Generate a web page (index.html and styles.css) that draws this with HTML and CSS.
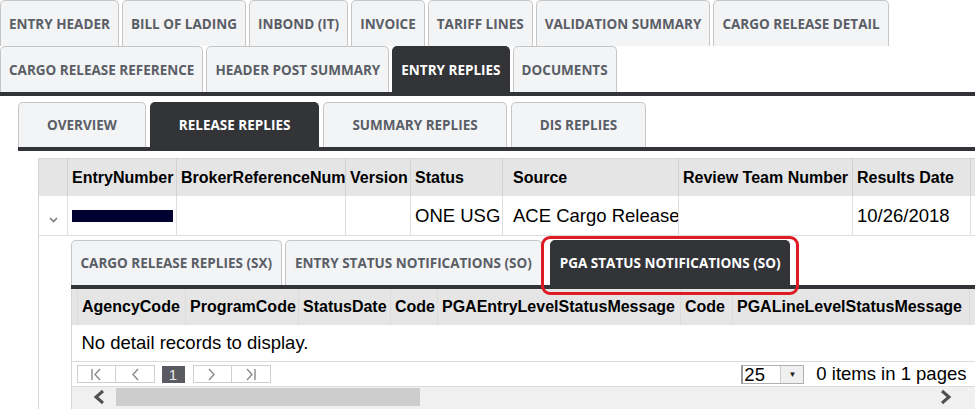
FILE: index.html
```html
<!DOCTYPE html>
<html lang="en">
<head>
  <meta charset="UTF-8" />
  <title>Entry Replies</title>
  <link rel="stylesheet" href="styles.css">
</head>
<body>
  <ul class="tabs main-tabs">
    <li class="tab">Entry Header</li>
    <li class="tab">Bill of Lading</li>
    <li class="tab">Inbond (IT)</li>
    <li class="tab">Invoice</li>
    <li class="tab">Tariff Lines</li>
    <li class="tab">Validation Summary</li>
    <li class="tab">Cargo Release Detail</li>
    <li class="tab">Cargo Release Reference</li>
    <li class="tab">Header Post Summary</li>
    <li class="tab active">Entry Replies</li>
    <li class="tab">Documents</li>
  </ul>

  <ul class="tabs sub-tabs">
    <li class="tab">Overview</li>
    <li class="tab active">Release Replies</li>
    <li class="tab">Summary Replies</li>
    <li class="tab">DIS Replies</li>
  </ul>

  <div class="grid">
    <table class="grid-table">
      <colgroup>
        <col class="w-hier">
        <col class="w-entry">
        <col class="w-broker">
        <col class="w-version">
        <col class="w-status">
        <col class="w-source">
        <col class="w-team">
        <col class="w-date">
        <col class="w-rest">
      </colgroup>
      <thead>
        <tr>
          <th></th>
          <th>EntryNumber</th>
          <th>BrokerReferenceNum</th>
          <th>Version</th>
          <th>Status</th>
          <th class="source">Source</th>
          <th>Review Team Number</th>
          <th>Results Date</th>
          <th></th>
        </tr>
      </thead>
      <tbody>
        <tr class="master-row">
          <td class="expand">
            <svg width="9" height="6" viewBox="0 0 9 6"><path d="M1 1 L4.5 4.5 L8 1" fill="none" stroke="#7a7a7a" stroke-width="1.6"/></svg>
          </td>
          <td><span class="redacted"></span></td>
          <td></td>
          <td></td>
          <td>ONE USG</td>
          <td class="source">ACE Cargo Release</td>
          <td></td>
          <td>10/26/2018</td>
          <td></td>
        </tr>
        <tr class="detail-row">
          <td></td>
          <td class="detail-cell" colspan="8">
            <ul class="tabs inner-tabs">
              <li class="tab">Cargo Release Replies (SX)</li>
              <li class="tab">Entry Status Notifications (SO)</li>
              <li class="tab active callout">PGA Status Notifications (SO)</li>
            </ul>

            <div class="inner-grid">
              <div class="inner-scroll">
                <table class="inner-table">
                  <colgroup>
                    <col class="w-ihier">
                    <col class="w-agency">
                    <col class="w-program">
                    <col class="w-sdate">
                    <col class="w-code">
                    <col class="w-entrymsg">
                    <col class="w-code2">
                    <col class="w-linemsg">
                    <col class="w-irest">
                  </colgroup>
                  <thead>
                    <tr>
                      <th></th>
                      <th>AgencyCode</th>
                      <th>ProgramCode</th>
                      <th>StatusDate</th>
                      <th>Code</th>
                      <th>PGAEntryLevelStatusMessage</th>
                      <th>Code</th>
                      <th>PGALineLevelStatusMessage</th>
                      <th></th>
                    </tr>
                  </thead>
                </table>
              </div>
              <div class="no-records">No detail records to display.</div>

              <div class="pager">
                <span class="pg-btn">
                  <svg width="12" height="13" viewBox="0 0 12 13"><path d="M2 1 V12 M10 1 L5 6.5 L10 12" fill="none" stroke="#8a8a8a" stroke-width="1.4"/></svg>
                </span><span class="pg-btn">
                  <svg width="8" height="13" viewBox="0 0 8 13"><path d="M7 1 L2 6.5 L7 12" fill="none" stroke="#8a8a8a" stroke-width="1.4"/></svg>
                </span>
                <span class="pg-current">1</span>
                <span class="pg-btn">
                  <svg width="8" height="13" viewBox="0 0 8 13"><path d="M1 1 L6 6.5 L1 12" fill="none" stroke="#8a8a8a" stroke-width="1.4"/></svg>
                </span><span class="pg-btn">
                  <svg width="12" height="13" viewBox="0 0 12 13"><path d="M2 1 L7 6.5 L2 12 M10 1 V12" fill="none" stroke="#8a8a8a" stroke-width="1.4"/></svg>
                </span>

                <div class="page-size">
                  <span class="ps-value">25</span>
                  <span class="ps-arrow">▼</span>
                </div>
                <span class="pager-info">0 items in 1 pages</span>
              </div>

              <div class="hscroll">
                <span class="sb-arrow sb-left">
                  <svg width="12" height="16" viewBox="0 0 12 16"><path d="M10 2 L3 8 L10 14" fill="none" stroke="#505050" stroke-width="3"/></svg>
                </span>
                <span class="sb-thumb"></span>
                <span class="sb-arrow sb-right">
                  <svg width="12" height="16" viewBox="0 0 12 16"><path d="M2 2 L9 8 L2 14" fill="none" stroke="#505050" stroke-width="3"/></svg>
                </span>
              </div>
            </div>
          </td>
        </tr>
      </tbody>
    </table>
  </div>
</body>
</html>
```

FILE: styles.css
```css
html, body {
  margin: 0;
  overflow: hidden;
}

body {
  width: 975px;
  height: 409px;
  background: #ffffff;
  color: #000000;
  font-family: 'Liberation Sans', Arial, sans-serif;
}

/* tab strips */
.tabs {
  list-style: none;
  margin: 0;
  padding: 0;
  display: flex;
  flex-wrap: wrap;
  column-gap: 3px;
  border-bottom: 4px solid #333438;
}

.tab {
  box-sizing: border-box;
  height: 46px;
  display: flex;
  align-items: center;
  padding: 0 8px;
  background: #f3f4f6;
  border: 1px solid #c6c6c6;
  border-bottom: none;
  border-radius: 5px 5px 0 0;
  color: #5a5e66;
  font-family: 'Open Sans', sans-serif;
  font-weight: 700;
  font-size: 13.5px;
  text-transform: uppercase;
  white-space: nowrap;
}

.tab.active {
  background: #333438;
  border-color: #333438;
  color: #ffffff;
}

.sub-tabs {
  margin: 6px 0 0 18px;
  column-gap: 4px;
}

.sub-tabs .tab {
  height: 45px;
  padding: 0 28px;
  justify-content: center;
}

.inner-tabs {
  column-gap: 3px;
}

.inner-tabs .tab {
  height: 45px;
  padding: 0 9px;
}

.callout {
  position: relative;
  margin-left: 5px;
}

.callout::after {
  content: '';
  position: absolute;
  top: -5px;
  left: -10px;
  right: -10px;
  bottom: -10px;
  border: 3px solid #de1a22;
  border-radius: 9px;
}

/* outer grid */
.grid {
  margin: 7px 0 0 38px;
}

.grid-table {
  border-collapse: collapse;
  table-layout: fixed;
  width: 1040px;
  border-left: 1px solid #d6d6d6;
  border-top: 1px solid #d6d6d6;
}

.w-hier { width: 29px; }
.w-entry { width: 109px; }
.w-broker { width: 169px; }
.w-version { width: 65px; }
.w-status { width: 92px; }
.w-source { width: 176px; }
.w-team { width: 174px; }
.w-date { width: 118px; }
.w-rest { width: 108px; }

.grid-table th {
  height: 37px;
  padding: 0 4px;
  background: #e5e5e5;
  border-right: 1px solid #d2d2d2;
  font-size: 16px;
  font-weight: 700;
  text-align: left;
  white-space: nowrap;
  overflow: hidden;
}

.master-row td {
  height: 37px;
  padding: 0 4px;
  border-right: 1px solid #dedede;
  border-bottom: 1px solid #dedede;
  font-size: 18.5px;
  white-space: nowrap;
  overflow: hidden;
}

.grid-table .source {
  padding-left: 10px;
}

.master-row td.expand {
  padding: 2px 0 0;
  text-align: center;
}

.redacted {
  display: block;
  width: 101px;
  height: 12px;
  background: #00002e;
}

.detail-row td {
  vertical-align: top;
  padding: 0;
}

.detail-cell {
  padding: 4px 0 0 3px !important;
}

/* inner grid */
.inner-grid {
  width: 905px;
  border-left: 1px solid #d6d6d6;
}

.inner-scroll {
  overflow: hidden;
}

.inner-table {
  border-collapse: collapse;
  table-layout: fixed;
  width: 1000px;
}

.w-ihier { width: 6px; }
.w-agency { width: 108px; }
.w-program { width: 113px; }
.w-sdate { width: 92px; }
.w-code { width: 47px; }
.w-entrymsg { width: 243px; }
.w-code2 { width: 52px; }
.w-linemsg { width: 237px; }
.w-irest { width: 102px; }

.inner-table th {
  height: 36px;
  padding: 0 4px;
  border-right: 1px solid #dcdcdc;
  font-size: 16px;
  font-weight: 700;
  text-align: left;
  white-space: nowrap;
  overflow: hidden;
}

.inner-table th:first-child {
  padding: 0;
}

.no-records {
  height: 36px;
  line-height: 36px;
  padding-left: 10px;
  border-bottom: 1px solid #dcdcdc;
  font-size: 18.5px;
}

/* pager */
.pager {
  height: 24px;
  display: flex;
  align-items: center;
  padding: 0 10px 0 5px;
  border-bottom: 1px solid #dcdcdc;
}

.pg-btn {
  box-sizing: border-box;
  width: 39px;
  height: 18px;
  display: flex;
  align-items: center;
  justify-content: center;
  border: 1px solid #cfcfcf;
  background: #ffffff;
}

.pg-btn + .pg-btn {
  border-left: none;
}

.pg-current {
  box-sizing: border-box;
  width: 23px;
  height: 17px;
  margin: 0 8px 0 7px;
  background: #5a5a62;
  color: #e8e8e8;
  font-size: 15px;
  line-height: 17px;
  text-align: center;
}

.page-size {
  margin-left: auto;
  box-sizing: border-box;
  width: 63px;
  height: 19px;
  display: flex;
  border: 1px solid #b0b0b0;
  border-left: 2px solid #9a9a9a;
}

.ps-value {
  flex: 1;
  font-size: 18.5px;
  line-height: 17px;
  padding-left: 1px;
}

.ps-arrow {
  width: 22px;
  background: #f0f0f0;
  border-left: 1px solid #cccccc;
  font-size: 8px;
  line-height: 17px;
  text-align: center;
  color: #222;
}

.pager-info {
  margin-left: 12px;
  font-size: 18.5px;
}

/* horizontal scrollbar */
.hscroll {
  height: 22px;
  display: flex;
  align-items: flex-start;
  background: #f0f0f0;
}

.sb-arrow {
  box-sizing: border-box;
  width: 44px;
  height: 20px;
  display: flex;
  align-items: center;
  justify-content: center;
}

.sb-left {
  padding-left: 10px;
}

.sb-thumb {
  width: 304px;
  height: 18px;
  margin-top: 1px;
  background: #cdcdcd;
}

.sb-right {
  margin-left: auto;
  padding-right: 18px;
}
```
